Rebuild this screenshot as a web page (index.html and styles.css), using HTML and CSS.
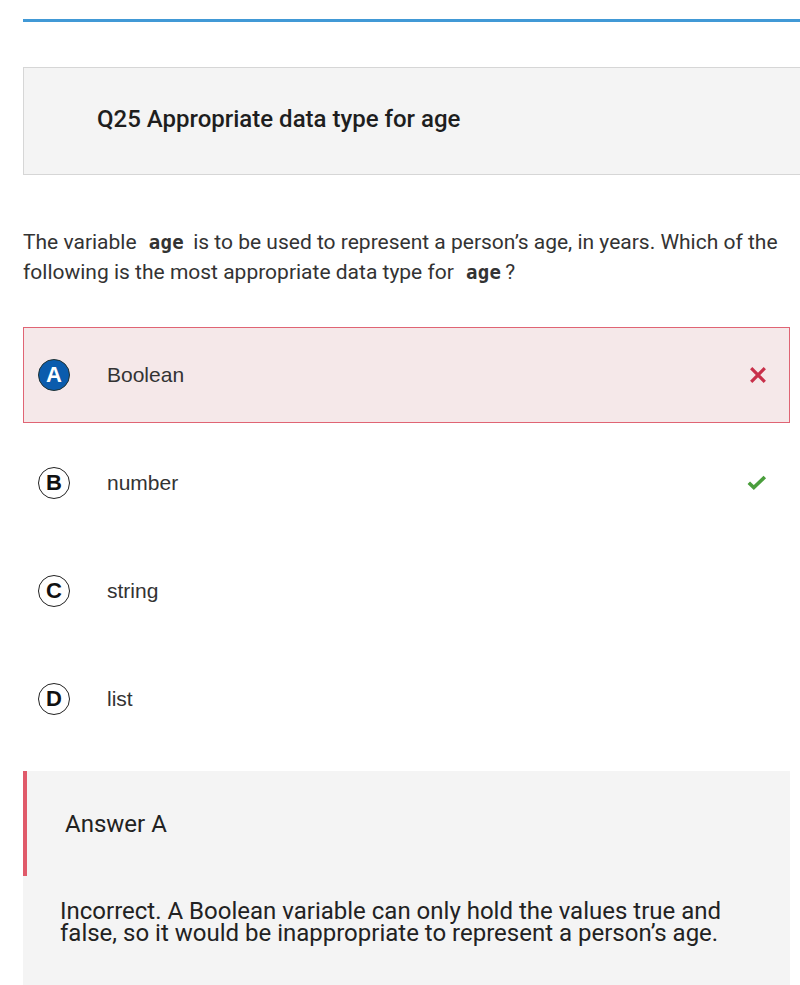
FILE: index.html
```html
<!DOCTYPE html>
<html>
<head>
<meta charset="utf-8">
<link rel="stylesheet" href="styles.css">
</head>
<body>
<div class="page">
  <div class="topline"></div>
  <div class="qhead"><h2 class="qtitle">Q25 Appropriate data type for age</h2></div>
  <p class="stem">The variable <code>age</code> is to be used to represent a person’s age, in years. Which of the following is the most appropriate data type for <code>age</code>?</p>
  <ul class="options">
    <li class="opt wrong">
      <span class="letter filled">A</span>
      <span class="label">Boolean</span>
      <svg class="mark" width="18" height="18" viewBox="0 0 18 18"><path d="M2.2 2.2 L15.8 15.8 M15.8 2.2 L2.2 15.8" stroke="#c8304a" stroke-width="3.2" stroke-linecap="butt" fill="none"/></svg>
    </li>
    <li class="opt">
      <span class="letter">B</span>
      <span class="label">number</span>
      <svg class="mark" width="20" height="16" viewBox="0 0 20 16"><path d="M1.8 7.8 L6.8 12.6 L17.8 2" stroke="#4a9e3c" stroke-width="3.6" fill="none"/></svg>
    </li>
    <li class="opt">
      <span class="letter">C</span>
      <span class="label">string</span>
    </li>
    <li class="opt">
      <span class="letter">D</span>
      <span class="label">list</span>
    </li>
  </ul>
  <div class="answer">
    <div class="ahead">Answer A</div>
    <p class="aexp">Incorrect. A Boolean variable can only hold the values true and false, so it would be inappropriate to represent a person’s age.</p>
  </div>
</div>
</body>
</html>
```
FILE: styles.css
```css
html, body {
  margin: 0;
  padding: 0;
  background: #fff;
  overflow-x: hidden;
}
.page {
  padding: 19px 10px 0 23px;
  font-family: Roboto, "Liberation Sans", sans-serif;
  color: #333;
}
.topline {
  height: 3px;
  background: #4199d6;
  margin-right: -40px;
}
.qhead {
  margin-top: 45px;
  margin-right: -40px;
  height: 106px;
  background: #f4f4f4;
  border: 1px solid #d6d6d6;
  display: flex;
  align-items: center;
  padding-left: 73px;
}
.qtitle {
  margin: 0 0 4px;
  font-size: 24px;
  font-weight: 500;
  color: #1e1e1e;
}
.stem {
  margin: 52px 0 0;
  font-size: 21px;
  line-height: 30px;
  color: #333;
}
.stem code {
  font-family: "DejaVu Sans Mono", monospace;
  font-weight: bold;
  font-size: 19px;
  line-height: 1;
  letter-spacing: 0.3px;
  padding: 0 4px 0 7px;
  color: #333;
}
.options {
  list-style: none;
  margin: 40px 0 0;
  padding: 0;
  display: flex;
  flex-direction: column;
  gap: 12px;
}
.opt {
  height: 94px;
  border: 1px solid transparent;
  display: flex;
  align-items: center;
  padding: 0 22px 0 14px;
  font-family: "Liberation Sans", Arial, sans-serif;
}
.opt.wrong {
  background: #f5e8e9;
  border-color: #e06474;
}
.letter {
  width: 30px;
  height: 30px;
  border: 1px solid #222;
  border-radius: 50%;
  display: flex;
  align-items: center;
  justify-content: center;
  font-weight: bold;
  font-size: 22px;
  color: #111;
  flex: none;
}
.letter.filled {
  background: #0b5cad;
  border-color: #233;
  color: #fff;
}
.label {
  margin-left: 37px;
  font-size: 21px;
  color: #333;
  flex: 1;
}
.mark {
  flex: none;
}
.answer {
  margin-top: 24px;
  background: #f4f4f4;
  padding-bottom: 50px;
}
.ahead {
  height: 105px;
  border-left: 4px solid #e05a6a;
  display: flex;
  align-items: center;
  padding-left: 38px;
  font-size: 24px;
  color: #222;
}
.aexp {
  margin: 24px 60px 0 37px;
  font-size: 24px;
  line-height: 22px;
  color: #222;
}
```
